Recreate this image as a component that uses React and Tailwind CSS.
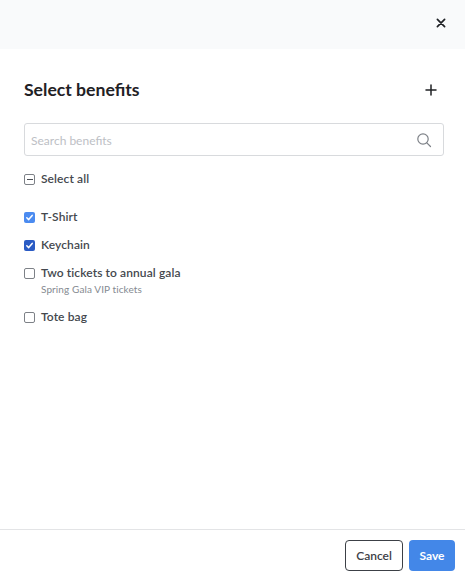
import React from "react";

function Box({ state }) {
  if (state === "light" || state === "dark") {
    return (
      <span className={`flex h-[11px] w-[11px] shrink-0 items-center justify-center rounded-[2px] ${state === "light" ? "bg-[#4b8bf0]" : "bg-[#2a5bc4]"}`}>
        <svg width="9" height="9" viewBox="0 0 9 9" fill="none" stroke="#fff" strokeWidth="1.5" strokeLinecap="round" strokeLinejoin="round">
          <path d="M1.8 4.7 3.7 6.6 7.2 2.4" />
        </svg>
      </span>
    );
  }
  if (state === "mixed") {
    return (
      <span className="flex h-[11px] w-[11px] shrink-0 items-center justify-center rounded-[2px] border border-[#7d8187]">
        <span className="h-px w-[6px] bg-[#4b4f55]" />
      </span>
    );
  }
  return <span className="h-[11px] w-[11px] shrink-0 rounded-[2px] border border-[#7d8187]" />;
}

function Row({ state, label, className = "" }) {
  return (
    <div className={`flex items-center gap-[6px] text-[12px] leading-[16px] font-semibold tracking-[0.1px] text-[#44484e] ${className}`}>
      <Box state={state} />
      <span>{label}</span>
    </div>
  );
}

export default function App() {
  return (
    <div className="flex h-[575px] w-[465px] flex-col overflow-hidden bg-white font-['Lato',sans-serif]">
      <div className="flex h-[49px] items-center justify-end bg-[#f9fafb] pr-[19px] pb-[3px]">
        <svg width="10" height="10" viewBox="0 0 10 10" fill="none" stroke="#1f2125" strokeWidth="1.7" strokeLinecap="round">
          <path d="M1.4 1.4 8.6 8.6M8.6 1.4 1.4 8.6" />
        </svg>
      </div>

      <div className="flex flex-1 flex-col pr-[21px] pl-[24px]">
        <div className="mt-[29px] flex h-[24px] items-center justify-between pr-[7px]">
          <h1 className="text-[17.6px] leading-[24px] font-bold text-[#1f2125]">Select benefits</h1>
          <svg width="12" height="12" viewBox="0 0 12 12" fill="none" stroke="#1f2125" strokeWidth="1.5" strokeLinecap="round">
            <path d="M6 1v10M1 6h10" />
          </svg>
        </div>

        <div className="mt-[21px] flex h-[33px] items-center justify-between rounded-[3px] border border-[#d8dadd] pr-[11px] pl-[6px]">
          <span className="pt-[2px] text-[12px] leading-[16px] text-[#bdc0c5]">Search benefits</span>
          <svg width="16" height="16" viewBox="0 0 16 16" fill="none" stroke="#7d8187" strokeWidth="1.2" strokeLinecap="round">
            <circle cx="7" cy="7" r="5.2" />
            <path d="m10.8 10.8 3.7 3.7" />
          </svg>
        </div>

        <Row state="mixed" label="Select all" className="mt-[15px]" />

        <div className="mt-[22px] flex flex-col gap-[12px]">
          <Row state="light" label="T-Shirt" />
          <Row state="dark" label="Keychain" />
          <div>
            <Row state="empty" label="Two tickets to annual gala" />
            <p className="pl-[17px] text-[10px] leading-[16px] tracking-[0.1px] text-[#858a91]">Spring Gala VIP tickets</p>
          </div>
          <Row state="empty" label="Tote bag" />
        </div>
      </div>

      <div className="flex h-[46px] items-start justify-end gap-[6px] border-t border-[#e3e4e6] pt-[10px] pr-[10px]">
        <button className="h-[31px] w-[58px] rounded-[4px] border border-[#3c4046] bg-white text-[12px] font-semibold text-[#3c4046]">Cancel</button>
        <button className="h-[31px] w-[46px] rounded-[4px] bg-[#4387e8] text-[12px] font-bold text-white">Save</button>
      </div>
    </div>
  );
}
